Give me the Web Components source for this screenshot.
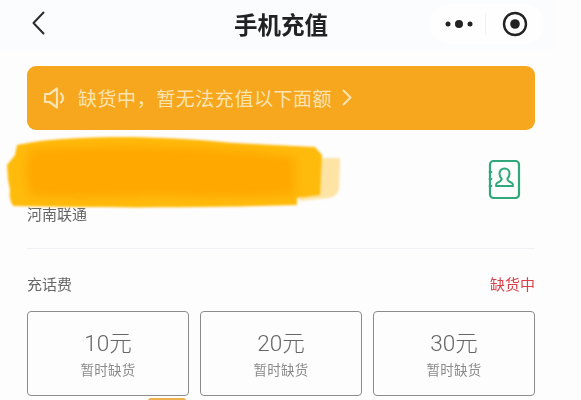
<!DOCTYPE html>
<html>
<head>
<meta charset="utf-8">
<style>
html,body{margin:0;background:#fdfdfe;}
body{font-family:"Noto Sans CJK SC","Liberation Sans",sans-serif;width:581px;height:400px;overflow:hidden;}
.cards{display:grid;grid-template-columns:repeat(3,1fr);gap:11px;}
.peek{width:38px;height:6px;margin:2px 0 0 121px;background:#eeb04a;border-radius:3px 3px 0 0;}
</style>
</head>
<body>
<phone-page>
  <nav-bar title="手机充值"></nav-bar>
  <notice-banner>缺货中，暂无法充值以下面额</notice-banner>
  <account-row carrier="河南联通"></account-row>
  <section-head label="充话费" status="缺货中"></section-head>
  <div class="cards">
    <amount-card value="10元" note="暂时缺货"></amount-card>
    <amount-card value="20元" note="暂时缺货"></amount-card>
    <amount-card value="30元" note="暂时缺货"></amount-card>
  </div>
  <div class="peek"></div>
</phone-page>
<script>
class phone_page extends HTMLElement {
  constructor() {
    super();
    this.attachShadow({ mode: "open" }).innerHTML = `
      <style>
:host{ display:block; filter:blur(.45px); }
.body{ padding:0 46px 0 27px; }
      </style>
      <slot name="top"></slot>
      <div class="body"><slot></slot></div>
    `;
  }
  connectedCallback() {
    this.querySelector("nav-bar").slot = "top";
  }
}

class nav_bar extends HTMLElement {
  constructor() {
    super();
    this.attachShadow({ mode: "open" }).innerHTML = `
      <style>
:host{ display:block; height:66px; }
.bar{
  height:50px;
  margin-right:26px;
  background:#fbfcfe;
  display:flex;
  align-items:center;
  justify-content:space-between;
  padding:0 11px 4px 32px;
  box-sizing:border-box;
  position:relative;
}
.title{
  position:absolute;
  left:234px;
  top:7px;
  font-size:23.5px;
  line-height:34px;
  font-weight:700;
  color:#222;
  white-space:nowrap;
}
.capsule{
  display:flex;
  align-items:center;
  width:114px;
  height:40px;
  margin-top:2px;
  border-radius:20px;
  background:#fefeff;
}
.more{ width:53px; display:flex; justify-content:center; padding-left:2px; }
.line{ width:1px; height:22px; background:#f0f1f3; }
.target{ flex:1; display:flex; justify-content:center; }
      </style>
      <div class="bar">
        <svg width="13" height="24" viewBox="0 0 13 24" fill="none" stroke="#2b2b2b" stroke-width="2" stroke-linecap="round" stroke-linejoin="round"><path d="M11.500 1.500 1.500 12l10 10.500"/></svg>
        <div class="title">${this.getAttribute("title")}</div>
        <div class="capsule">
          <div class="more">
            <svg width="28" height="8" viewBox="0 0 28 8" fill="#222"><circle cx="3" cy="4" r="2.500"/><circle cx="14" cy="4" r="4"/><circle cx="25" cy="4" r="2.500"/></svg>
          </div>
          <div class="line"></div>
          <div class="target">
            <svg width="26" height="26" viewBox="0 0 26 26"><circle cx="13" cy="13" r="11" fill="none" stroke="#222" stroke-width="2.400"/><circle cx="13" cy="13" r="4.800" fill="#222"/></svg>
          </div>
        </div>
      </div>
    `;
  }
}

class notice_banner extends HTMLElement {
  constructor() {
    super();
    this.attachShadow({ mode: "open" }).innerHTML = `
      <style>
:host{ display:block; }
.banner{
  height:64px;
  box-sizing:border-box;
  background:#f6a71e;
  border-radius:9px;
  display:flex;
  align-items:center;
  padding:0 0 1px 16px;
  color:#fbe3b2;
  font-size:19px;
  letter-spacing:.55px;
}
.text{ margin-left:12px; white-space:nowrap; }
.arrow{ margin-left:10px; }
      </style>
      <div class="banner">
        <svg width="23" height="24" viewBox="0 0 23 24" fill="none" stroke="#fbe3b2" stroke-width="2.200" stroke-linejoin="round" stroke-linecap="round"><path d="M2 8h4.500L14 2.500v19L6.500 16H2z"/><path d="M18 7.500c2.600 2.800 2.600 6.200 0 9"/></svg>
        <span class="text"><slot></slot></span>
        <svg class="arrow" width="10" height="17" viewBox="0 0 10 17" fill="none" stroke="#fbe3b2" stroke-width="2" stroke-linecap="round" stroke-linejoin="round"><path d="m1.500 1.500 7 7-7 7"/></svg>
      </div>
    `;
  }
}

class account_row extends HTMLElement {
  constructor() {
    super();
    this.attachShadow({ mode: "open" }).innerHTML = `
      <style>
:host{ display:block; position:relative; height:119px; border-bottom:1px solid #eff0f3; box-sizing:border-box; }
.row{ display:flex; justify-content:space-between; padding:29px 14px 0 0; }
.carrier{ font-size:15px; line-height:22px; color:#666; padding-top:44px; white-space:nowrap; }
.scribble{ position:absolute; left:-25px; top:5px; }
.edge{ filter:blur(1px); }
.core{ filter:blur(5px); }
      </style>
      <div class="row">
        <div class="carrier">${this.getAttribute("carrier")}</div>
        <svg width="33" height="41" viewBox="0 0 33 41" fill="none" stroke="#30a87b" stroke-width="2.200" stroke-linejoin="round" stroke-linecap="round">
          <rect x="2" y="2" width="29" height="37" rx="3.500"/>
          <path d="M1.500 13h2M1.500 20h2M1.500 27h2" stroke-width="1.800"/>
          <path d="M16.500 9.500c-3.200 0-5 2.300-5 5.200 0 2 .8 3.500 2 4.600.3 1.300-.2 2.300-1.500 3l-2.800 1.600c-1 .6-1.200 1.500-1.200 3.100h17c0-1.600-.2-2.500-1.200-3.100L21 22.300c-1.300-.7-1.800-1.700-1.500-3 1.200-1.100 2-2.600 2-4.600 0-2.900-1.800-5.200-5-5.200z" stroke-width="2"/>
        </svg>
      </div>
      <svg class="scribble" width="345" height="75" viewBox="0 0 345 75">
        <path class="edge" d="M316 23h20q3 0 2 5l-1 26q-2 8-10 9l-30 3z" fill="#fde4a4"/>
        <path class="edge" d="M15 10C48 3 88 2 131 2c40 1 70 3 100 6l82 4 7 8-2 40-23 3v7c-90 3-200 3-284 1-3-5-4-10-3-16l-2-10-1-15 8-10z" fill="#ffbb0b"/>
        <path class="core" d="M28 14c80-6 190-4 265 8v38c-70 4-110 2-140 0-40 2-90 5-125 0-6-14-6-32 0-46z" fill="#ffa800"/>
      </svg>
    `;
  }
}

class section_head extends HTMLElement {
  constructor() {
    super();
    this.attachShadow({ mode: "open" }).innerHTML = `
      <style>
:host{ display:flex; justify-content:space-between; align-items:center; height:62px; padding-top:21px; padding-bottom:14px; box-sizing:border-box; font-size:15px; white-space:nowrap; }
.label{ color:#666; }
.status{ color:#d8414a; }
      </style>
      <span class="label">${this.getAttribute("label")}</span>
      <span class="status">${this.getAttribute("status")}</span>
    `;
  }
}

class amount_card extends HTMLElement {
  constructor() {
    super();
    this.attachShadow({ mode: "open" }).innerHTML = `
      <style>
:host{ display:block; }
.card{
  height:85px;
  box-sizing:border-box;
  border:1.500px solid #8b8b8d;
  border-radius:4px;
  display:flex;
  flex-direction:column;
  align-items:center;
  justify-content:center;
}
.value{ font-size:22.500px; line-height:30px; color:#666; font-weight:300; font-family:Roboto,"Noto Sans CJK SC",sans-serif; }
.note{ font-size:13.500px; line-height:20px; margin-top:1px; color:#8a8a8a; letter-spacing:.3px; }
      </style>
      <div class="card">
        <div class="value">${this.getAttribute("value")}</div>
        <div class="note">${this.getAttribute("note")}</div>
      </div>
    `;
  }
}

customElements.define("phone-page", phone_page);
customElements.define("nav-bar", nav_bar);
customElements.define("notice-banner", notice_banner);
customElements.define("account-row", account_row);
customElements.define("section-head", section_head);
customElements.define("amount-card", amount_card);
</script>
</body>
</html>
